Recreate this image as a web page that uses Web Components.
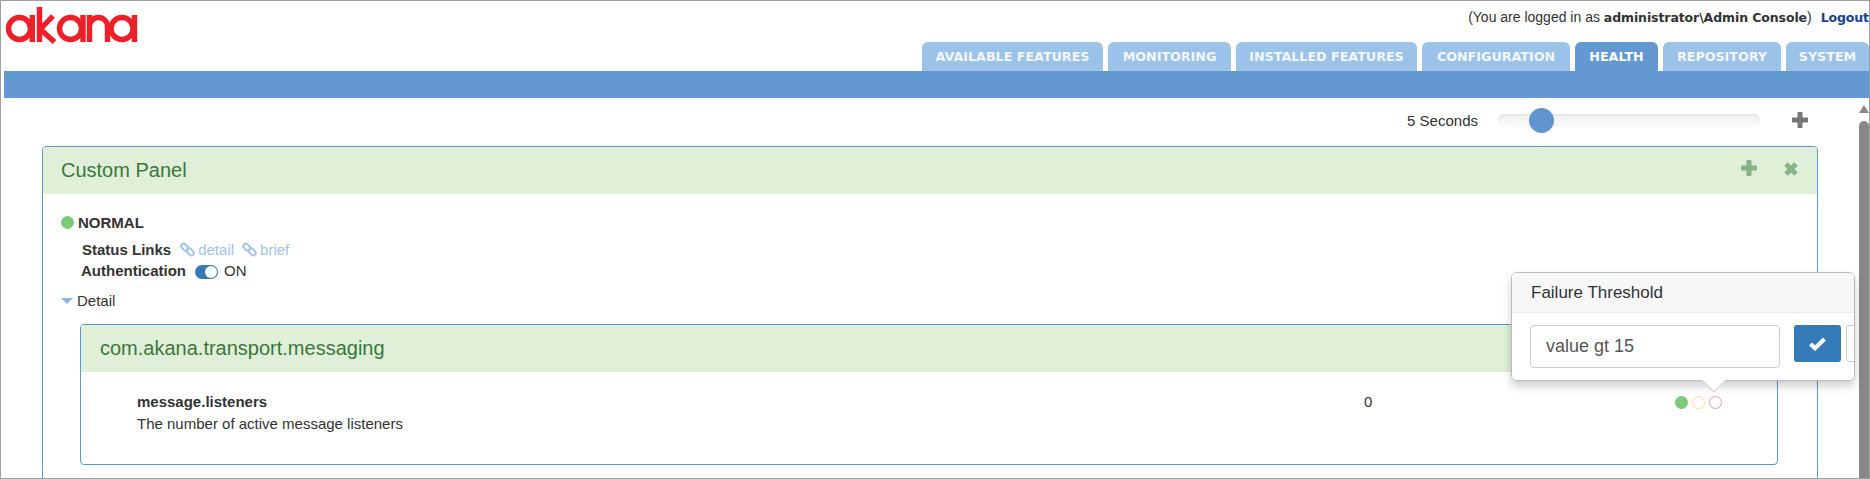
<!DOCTYPE html>
<html>
<head>
<meta charset="utf-8">
<title>Health</title>
<style>
  html, body { margin: 0; padding: 0; background: #fff; }
  body { width: 1870px; height: 479px; overflow: hidden; font-family: "Liberation Sans", Arial, sans-serif; font-size: 15px; color: #333; }
</style>
</head>
<body>
<akana-app></akana-app>
<script>
customElements.define("akana-logo", class extends HTMLElement {
  constructor() {
    super();
    this.attachShadow({ mode: "open" }).innerHTML = `
      <style>:host{display:block;width:140px;height:44px}svg{display:block}</style>
      <svg width="140" height="44" viewBox="0 0 140 44" fill="none" stroke="#ed2029" stroke-width="5.4" role="img" aria-label="akana">
        <circle cx="18.5" cy="27.5" r="11"/><path d="M31.3 14V41"/>
        <path d="M38.5 6V41M38.5 29L52 15M38.5 27.5L53.5 41"/>
        <circle cx="69.5" cy="27.5" r="11"/><path d="M82 14V41"/>
        <path d="M88.5 41V14M88.5 25.5a9 9 0 0 1 18 0V41"/>
        <circle cx="121" cy="27.5" r="11"/><path d="M133.5 14V41"/>
      </svg>`;
  }
});

customElements.define("nav-tab", class extends HTMLElement {
  constructor() {
    super();
    this.attachShadow({ mode: "open" }).innerHTML = `
      <style>
        :host{display:flex;align-items:center;justify-content:center;height:29px;box-sizing:border-box;padding-bottom:1px;
          background:#9bc3e9;border-radius:6px 6px 0 0;color:#f3f7fc;white-space:nowrap;
          font:bold 12.7px "DejaVu Sans",sans-serif}
        :host([active]){background:#6398d0;color:#fff}
      </style><slot></slot>`;
  }
  connectedCallback() { this.style.width = this.getAttribute("w") + "px"; }
});

customElements.define("app-header", class extends HTMLElement {
  constructor() {
    super();
    this.attachShadow({ mode: "open" }).innerHTML = `
      <style>
        :host{display:flex;justify-content:space-between;height:70px}
        .right{display:flex;flex-direction:column;align-items:flex-end}
        .login{height:41px;padding-top:8px;box-sizing:border-box;font:14px/16px "Liberation Sans",sans-serif;color:#333;white-space:nowrap}
        .login b{font:bold 12.5px/16px "DejaVu Sans",sans-serif;letter-spacing:-.1px}
        .login a{font:bold 12.5px/16px "DejaVu Sans",sans-serif;letter-spacing:-.1px;color:#1a3f8f;margin-left:9px}
        .tabs{display:flex;gap:5px}
      </style>
      <akana-logo></akana-logo>
      <div class="right">
        <div class="login">(You are logged in as <b>administrator\\Admin Console</b>)<a>Logout</a></div>
        <div class="tabs">
          <nav-tab w="181">AVAILABLE FEATURES</nav-tab>
          <nav-tab w="123">MONITORING</nav-tab>
          <nav-tab w="181">INSTALLED FEATURES</nav-tab>
          <nav-tab w="148">CONFIGURATION</nav-tab>
          <nav-tab w="83" active>HEALTH</nav-tab>
          <nav-tab w="118">REPOSITORY</nav-tab>
          <nav-tab w="83">SYSTEM</nav-tab>
        </div>
      </div>`;
  }
});

const plus = c => `<svg width="18" height="18" viewBox="0 0 18 18"><path d="M7 1.5h4v5.5h5.5v4H11v5.5H7V11H1.5V7H7z" fill="${c}" stroke="${c}" stroke-linejoin="round"/></svg>`;
const cross = c => `<svg width="16" height="16" viewBox="0 0 16 16"><path d="M3 3l10 10M13 3L3 13" fill="none" stroke="${c}" stroke-width="5"/></svg>`;

customElements.define("refresh-slider", class extends HTMLElement {
  constructor() {
    super();
    this.attachShadow({ mode: "open" }).innerHTML = `
      <style>
        :host{display:flex;align-items:center;justify-content:flex-end;height:48px;box-sizing:border-box;padding:0 50px 4px 0;font-size:15px;color:#333}
        .track{position:relative;width:262px;height:13px;margin:0 31px 0 20px;border-radius:7px;
          background:linear-gradient(#f0f0f0,#fafafa);box-shadow:inset 0 1px 2px rgba(0,0,0,.07)}
        .thumb{position:absolute;left:31px;top:-6px;width:25px;height:25px;border-radius:50%;background:#5f96cf}
        svg{display:block}
      </style>
      <span>5 Seconds</span>
      <div class="track"><div class="thumb"></div></div>
      ${plus("#777")}`;
  }
});

customElements.define("health-panel", class extends HTMLElement {
  constructor() {
    super();
    this.attachShadow({ mode: "open" }).innerHTML = `
      <style>
        :host{display:block;border:1px solid #5f96cf;border-radius:4px;background:#fff;box-sizing:border-box}
        .head{display:flex;align-items:center;justify-content:space-between;height:47px;box-sizing:border-box;padding:0 18px 0 var(--head-pad,18px);
          background:#dfefd8;color:#3c763d;font-size:20px;border-radius:3px 3px 0 0}
        .tools{display:flex;align-items:center;gap:25px}
        svg{display:block}
      </style>
      <div class="head"><span></span><div class="tools"><slot name="tools"></slot></div></div>
      <slot></slot>`;
  }
  connectedCallback() { this.shadowRoot.querySelector(".head span").textContent = this.getAttribute("heading"); }
});

customElements.define("status-dot", class extends HTMLElement {
  constructor() {
    super();
    this.attachShadow({ mode: "open" }).innerHTML = `
      <style>
        :host{display:block;width:13px;height:13px;box-sizing:border-box;border-radius:50%;border:1px solid #7ccb7a;background:#7ccb7a}
        :host([kind=warn]){background:#fff;border-color:#fadd9c}
        :host([kind=fail]){background:#fff;border-color:#dfa5a5}
      </style>`;
  }
});

customElements.define("link-chip", class extends HTMLElement {
  constructor() {
    super();
    this.attachShadow({ mode: "open" }).innerHTML = `
      <style>
        :host{display:inline-flex;align-items:center;gap:3px;color:#a3c3e6;font-size:15px}
        svg{display:block}
      </style>
      <svg width="15" height="15" viewBox="0 0 15 15" fill="none" stroke="#a3c3e6" stroke-width="2">
        <rect x="0.8" y="2.6" width="7.8" height="5" rx="2.5" transform="rotate(45 4.7 5.1)"/>
        <rect x="6.4" y="7.4" width="7.8" height="5" rx="2.5" transform="rotate(45 10.3 9.9)"/>
      </svg>
      <slot></slot>`;
  }
});

customElements.define("toggle-switch", class extends HTMLElement {
  constructor() {
    super();
    this.attachShadow({ mode: "open" }).innerHTML = `
      <style>
        :host{display:block;position:relative;width:23px;height:14px;border-radius:7px;background:#337ab7}
        i{position:absolute;right:1px;top:1px;width:12px;height:12px;border-radius:50%;background:#fff}
      </style><i></i>`;
  }
});

customElements.define("panel-status", class extends HTMLElement {
  constructor() {
    super();
    this.attachShadow({ mode: "open" }).innerHTML = `
      <style>
        :host{display:block;padding:18px 0 0 18px;font-size:15px;color:#333}
        .row{display:flex;align-items:center}
        .normal{height:20px;gap:4px;font-weight:bold}
        .line{height:20px;margin-left:21px;margin-top:7px;gap:9px}
        .links{gap:8px}
        .line b{font-weight:bold}
        .line.auth{margin-left:20px;margin-top:1px;height:21px;gap:9px}
        .detail{height:20px;gap:4px;margin-top:9px}
        .tri{width:0;height:0;border:6px solid transparent;border-top:6px solid #90b4dc;border-bottom:0;margin-top:2px}
        .on{margin-left:-3px}
        toggle-switch{margin-top:2px}
      </style>
      <div class="row normal"><status-dot></status-dot>NORMAL</div>
      <div class="row line"><b>Status Links</b>
        <div class="row links"><link-chip>detail</link-chip><link-chip>brief</link-chip></div></div>
      <div class="row line auth"><b>Authentication</b><toggle-switch></toggle-switch><span class="on">ON</span></div>
      <div class="row detail"><span class="tri"></span>Detail</div>`;
  }
});

customElements.define("metric-row", class extends HTMLElement {
  constructor() {
    super();
    this.attachShadow({ mode: "open" }).innerHTML = `
      <style>
        :host{display:grid;grid-template-columns:1227px 1fr auto;padding:19px 55px 0 56px;font-size:15px;color:#333;line-height:22px}
        b{display:block}
        .dots{display:flex;gap:4px;height:22px;align-items:center}
      </style>
      <div><b>message.listeners</b>The number of active message listeners</div>
      <div>0</div>
      <div class="dots"><status-dot></status-dot><status-dot kind="warn"></status-dot><status-dot kind="fail"></status-dot></div>`;
  }
});

customElements.define("threshold-popover", class extends HTMLElement {
  constructor() {
    super();
    this.attachShadow({ mode: "open" }).innerHTML = `
      <style>
        :host{position:absolute;left:1510px;top:271px;width:344px;height:109px;box-sizing:border-box;font-size:15px;color:#333;
          background:#fff;border:1px solid #bdbdbd;border-radius:6px;box-shadow:0 5px 10px rgba(0,0,0,.2)}
        .tip{position:absolute;left:193px;top:98px;width:18px;height:18px;background:#fff;border:1px solid #cfcfcf;
          box-sizing:border-box;transform:rotate(45deg);border-top:0;border-left:0}
        .clip{position:relative;height:100%;overflow:hidden;border-radius:5px;background:#fff}
        .title{height:40px;box-sizing:border-box;padding:0 19px;line-height:39px;background:#f7f7f7;border-bottom:1px solid #ebebeb;font-size:17px}
        .form{display:flex;padding:12px 0 0 18px;gap:14px;width:400px}
        .input{width:250px;height:43px;box-sizing:border-box;padding:0 15px;line-height:41px;border:1px solid #ccc;border-radius:4px;font-size:18px;color:#555}
        .ok,.no{width:47px;height:37px;box-sizing:border-box;border-radius:3px;display:flex;align-items:center;justify-content:center}
        .ok{background:#337ab7}
        .no{border:1px solid #ccc;margin-left:-9px}
        svg{display:block}
      </style>
      <div class="tip"></div>
      <div class="clip">
        <div class="title">Failure Threshold</div>
        <div class="form">
          <div class="input">value gt 15</div>
          <div class="ok"><svg width="19" height="15" viewBox="0 0 19 15"><path d="M2.5 8l4.5 4.2L16.5 3" fill="none" stroke="#fff" stroke-width="4.2"/></svg></div>
          <div class="no"></div>
        </div>
      </div>`;
  }
});

customElements.define("fake-scrollbar", class extends HTMLElement {
  constructor() {
    super();
    this.attachShadow({ mode: "open" }).innerHTML = `
      <style>
        :host{display:flex;flex-direction:column;width:10px;padding-top:7px;box-sizing:border-box}
        .up{width:0;height:0;border:5px solid transparent;border-top:0;border-bottom:8px solid #888}
        .thumb{flex:1;margin-top:8px;background:#888;border-radius:5px 5px 0 0}
      </style>
      <div class="up"></div><div class="thumb"></div>`;
  }
});

customElements.define("akana-app", class extends HTMLElement {
  constructor() {
    super();
    this.attachShadow({ mode: "open" }).innerHTML = `
      <style>
        :host{position:relative;display:flex;flex-direction:column;width:1870px;height:479px;box-sizing:border-box;
          border:1px solid #a0a0a0;background:#fff;overflow:hidden}
        .bar{flex:none;height:27px;margin-left:3px;background:#6398d0}
        .content{flex:1;display:flex;min-height:0}
        main{flex:1;min-width:0;overflow:hidden}
        .outer{display:block;margin:0 41px;height:400px}
        .inner{display:block;margin:14px 39px 0 37px;height:141px;--head-pad:19px}
        [slot=tools]{display:block}
      </style>
      <app-header></app-header>
      <div class="bar"></div>
      <div class="content">
        <main>
          <refresh-slider></refresh-slider>
          <health-panel class="outer" heading="Custom Panel">
            <span slot="tools">${plus("#86b287")}</span>
            <span slot="tools">${cross("#86b287")}</span>
            <panel-status></panel-status>
            <health-panel class="inner" heading="com.akana.transport.messaging">
              <metric-row></metric-row>
            </health-panel>
          </health-panel>
        </main>
        <fake-scrollbar></fake-scrollbar>
      </div>
      <threshold-popover></threshold-popover>`;
  }
});
</script>
</body>
</html>
